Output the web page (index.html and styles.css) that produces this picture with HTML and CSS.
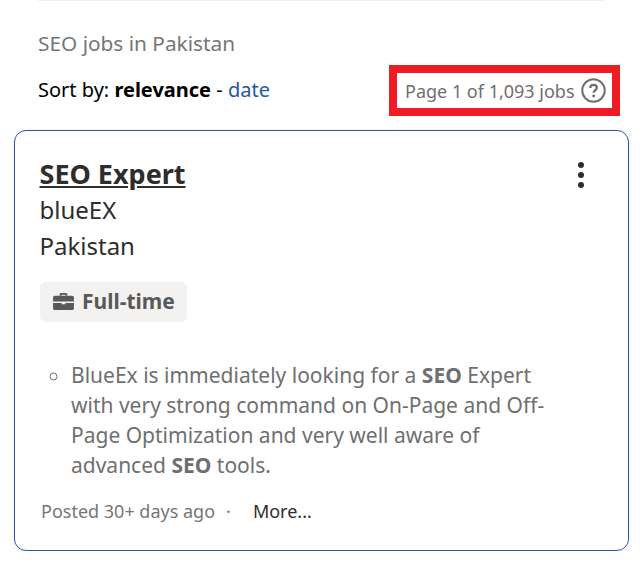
FILE: index.html
```html
<!DOCTYPE html>
<html lang="en">
<head>
    <meta charset="UTF-8">
    <link rel="stylesheet" href="styles.css">
    <title>SEO jobs in Pakistan</title>
</head>
<body>
  <div id="wrapper">
    <div class="topRule"></div>
    <h1 class="searchTitle">SEO jobs in Pakistan</h1>
    <div class="sortRow">
      <div class="sortBy">Sort by: <b>relevance</b> - <a href="#">date</a></div>
      <div class="jobCount">
        <span>Page 1 of 1,093 jobs</span>
        <svg class="helpIcon" viewBox="0 0 24 24" width="25" height="25">
          <circle cx="12" cy="12" r="10.8" fill="none" stroke="#6f6f6f" stroke-width="1.9"/>
          <path d="M8.9 9.6c0-1.900 1.400-3 3.200-3 1.800 0 3.100 1.100 3.100 2.700 0 2.400-3 2.500-3 4.800" fill="none" stroke="#6f6f6f" stroke-width="2.200"/>
          <circle cx="12.200" cy="17.300" r="1.400" fill="#6f6f6f"/>
        </svg>
      </div>
    </div>
    <div class="jobCard">
      <div class="cardHead">
        <div>
          <h2 class="jobTitle"><a href="#">SEO Expert</a></h2>
          <div class="company">blueEX</div>
          <div class="location">Pakistan</div>
        </div>
        <div class="dots"><i></i><i></i><i></i></div>
      </div>
      <div class="tag">
        <svg viewBox="0 0 24 20" width="23" height="19">
          <path d="M8 4V2.500C8 1.500 8.800 1 9.600 1h4.800C15.200 1 16 1.500 16 2.500V4h-2V3h-4v1z" fill="#595959"/>
          <path d="M3 4h18c1 0 2 .8 2 2v4H1V6c0-1.200 1-2 2-2z" fill="#595959"/>
          <path d="M1 11.500h9V13h4v-1.500h9V17c0 1.200-1 2-2 2H3c-1 0-2-.8-2-2z" fill="#595959"/>
        </svg>
        <span>Full-time</span>
      </div>
      <ul class="snippet">
        <li>BlueEx is immediately looking for a <b>SEO</b> Expert with very strong command on On-Page and Off-Page Optimization and very well aware of advanced <b>SEO</b> tools.</li>
      </ul>
      <div class="cardFoot">
        <span class="posted">Posted 30+ days ago</span>
        <span class="sep">&middot;</span>
        <a class="more" href="#">More...</a>
      </div>
    </div>
  </div>
</body>
</html>
```

FILE: styles.css
```css
*{box-sizing: border-box;}
body
{
  margin: 0;
  font-family: "Noto Sans", sans-serif;
  background-color: #fff;
}
#wrapper
{
  padding: 0 13px 0 14px;
}
.topRule
{
  height: 1px;
  margin: 0 24px;
  background-color: #f2f1f0;
}
.searchTitle
{
  margin: 28px 0 0 24px;
  font-size: 20.8px;
  line-height: 28px;
  font-weight: normal;
  color: #767676;
}
.sortRow
{
  display: flex;
  justify-content: space-between;
  align-items: flex-start;
  margin: 8px 0 14px;
  padding-left: 24px;
}
.sortBy
{
  margin-top: 11px;
  font-size: 20px;
  line-height: 28px;
  color: #000;
}
.sortBy a
{
  text-decoration: none;
  color: #2557a7;
}
.jobCount
{
  display: flex;
  align-items: center;
  gap: 6px;
  height: 51px;
  width: 231px;
  margin-right: 9px;
  padding-left: 8px;
  border: 8px solid #ee1c25;
  font-size: 18px;
  color: #6f6f6f;
}
.jobCard
{
  height: 421px;
  padding: 25px 24px 0 24.5px;
  border: 1px solid #2557a7;
  border-radius: 12px;
  box-shadow: 0 2px 6px rgba(0, 0, 0, .06);
}
.cardHead
{
  display: flex;
  justify-content: space-between;
}
.jobTitle
{
  margin: 0;
  font-size: 27px;
  line-height: 36px;
  font-weight: 700;
}
.jobTitle a
{
  color: #2d2d2d;
}
.company, .location
{
  font-size: 24px;
  line-height: 36px;
  color: #2d2d2d;
}
.dots
{
  display: flex;
  flex-direction: column;
  gap: 4px;
  margin: 6px 20px 0 0;
}
.dots i
{
  width: 6px;
  height: 6px;
  border-radius: 50%;
  background-color: #2d2d2d;
}
.tag
{
  display: inline-flex;
  align-items: center;
  gap: 7px;
  height: 40px;
  margin: 18px 0 0 .5px;
  padding: 0 12px 2px;
  border-radius: 6px;
  font-size: 21px;
  font-weight: 700;
  color: #595959;
  background-color: #f3f2f1;
}
.snippet
{
  margin: 38px 0 0;
  padding: 0 50px 0 31.5px;
  list-style-type: circle;
  font-size: 21px;
  line-height: 30px;
  color: #6f6f6f;
}
.cardFoot
{
  display: flex;
  align-items: center;
  margin: 18px 0 0 1.5px;
  font-size: 18px;
  line-height: 26px;
}
.posted
{
  color: #767676;
}
.sep
{
  margin: 0 22px 0 11px;
  color: #767676;
}
.more
{
  text-decoration: none;
  color: #2d2d2d;
}
```
